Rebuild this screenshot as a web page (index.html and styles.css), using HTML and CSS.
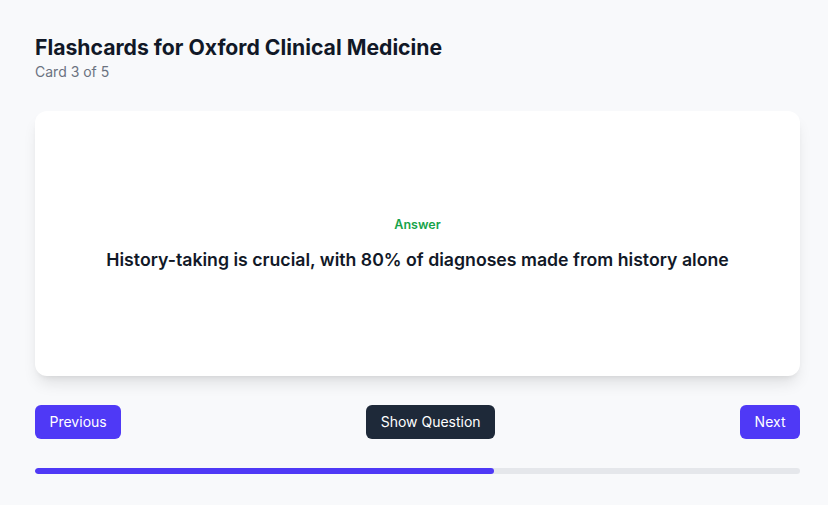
FILE: index.html
```html
<!DOCTYPE html>
<html lang="en">
<head>
<meta charset="utf-8">
<title>Flashcards</title>
<link rel="stylesheet" href="styles.css">
</head>
<body>
<main class="page">
  <header class="header">
    <h1 class="title">Flashcards for Oxford Clinical Medicine</h1>
    <p class="subtitle">Card 3 of 5</p>
  </header>
  <section class="card">
    <div class="label">Answer</div>
    <p class="content">History-taking is crucial, with 80% of diagnoses made from history alone</p>
  </section>
  <nav class="controls">
    <button class="btn btn-primary">Previous</button>
    <button class="btn btn-dark">Show Question</button>
    <button class="btn btn-primary">Next</button>
  </nav>
  <div class="progress"><div class="progress-fill" style="width:60%"></div></div>
</main>
</body>
</html>
```
FILE: styles.css
```css
* { box-sizing: border-box; }
html, body { margin: 0; padding: 0; }
body {
  background: #f8f9fb;
  font-family: Inter, "Noto Sans", sans-serif;
  color: #111827;
}
.page {
  padding: 33px 28px 30px 35px;
}
.header { margin-bottom: 29px; }
.title {
  margin: 0;
  font-size: 21.2px;
  font-weight: 700;
  line-height: 28px;
  color: #111827;
}
.subtitle {
  margin: 1px 0 0;
  font-size: 14px;
  line-height: 20px;
  color: #6b7280;
}
.card {
  background: #fff;
  border-radius: 12px;
  box-shadow: 0 10px 15px -3px rgba(0,0,0,0.1), 0 4px 6px -4px rgba(0,0,0,0.1);
  height: 265px;
  display: flex;
  flex-direction: column;
  align-items: center;
  justify-content: center;
  text-align: center;
  padding: 26px 24px 24px;
}
.label {
  font-size: 12.5px;
  line-height: 18px;
  font-weight: 600;
  color: #16a34a;
  margin-bottom: 12px;
}
.content {
  margin: 0;
  font-size: 17.7px;
  line-height: 28px;
  font-weight: 600;
  color: #111827;
}
.controls {
  display: flex;
  justify-content: space-between;
  align-items: center;
  margin-top: 29px;
}
.btn {
  border: 0;
  border-radius: 6px;
  font-family: Inter, "Noto Sans", sans-serif;
  font-size: 14px;
  font-weight: 400;
  line-height: 22px;
  padding: 6px 14.5px;
  color: #fff;
  cursor: pointer;
}
.btn-primary { background: #4f39f6; }
.btn-dark { background: #1e2939; }
.progress {
  margin-top: 29px;
  height: 6px;
  border-radius: 9999px;
  background: #e5e7eb;
  overflow: hidden;
}
.progress-fill {
  height: 100%;
  background: #4f39f6;
  border-radius: 9999px;
}
```
